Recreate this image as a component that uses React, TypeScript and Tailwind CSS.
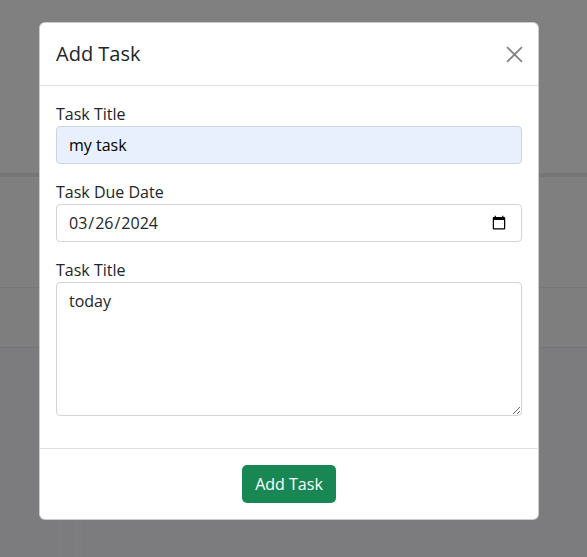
export default function App() {
  return (
    <div className="relative h-[557px] w-[587px] overflow-hidden bg-[#7c7c7e] font-['Open_Sans',sans-serif]">
      {/* underlying page, dimmed by backdrop */}
      <div className="flex flex-col">
        <div className="h-[173px] bg-[#808080]" />
        <div className="h-[4px] bg-[#767676]" />
        <div className="flex h-[110px] bg-[#7f7f80]" />
        <div className="h-[60px] border-t border-[#777779] bg-[#7e7e7f]" />
        <div className="flex h-[210px] border-t border-[#757577]">
          <div className="w-[57px]" />
          <div className="w-[6px] bg-[#7e7e80]" />
          <div className="w-[12px]" />
          <div className="w-[6px] bg-[#7e7e80]" />
        </div>
      </div>

      {/* modal */}
      <div className="absolute left-[39px] top-[22px] flex w-[500px] flex-col rounded-[6px] border border-black/20 bg-white text-[#212529]">
        <div className="flex items-center justify-between border-b border-[#dee2e6] px-4 py-4">
          <h5 className="text-[20px] leading-[30px]">Add Task</h5>
          <button className="mr-[-1px] flex h-[18px] w-[18px] items-center justify-center">
            <svg width="17" height="17" viewBox="0 0 16 16" fill="none" stroke="#808080" strokeWidth="1.6">
              <path d="M1 1L15 15M15 1L1 15" />
            </svg>
          </button>
        </div>

        <div className="flex flex-col gap-4 p-4 pb-8">
          <div>
            <label className="block text-[16px] leading-[24px]">Task Title</label>
            <input
              className="h-[38px] w-full rounded-[4px] border border-[#ced4da] bg-[#e8f0fe] px-3 text-[16px] text-black outline-none"
              defaultValue="my task"
            />
          </div>
          <div>
            <label className="block text-[16px] leading-[24px]">Task Due Date</label>
            <input
              type="date"
              className="h-[38px] w-full rounded-[4px] border border-[#ced4da] bg-white pl-[11px] pr-[12px] text-[16px] text-[#212529] outline-none"
              defaultValue="2024-03-26"
            />
          </div>
          <div>
            <label className="block text-[16px] leading-[24px]">Task Title</label>
            <textarea
              className="block h-[134px] w-full rounded-[4px] border border-[#ced4da] bg-white px-3 py-[6px] text-[16px] leading-[24px] text-[#212529] outline-none"
              defaultValue="today"
            />
          </div>
        </div>

        <div className="flex justify-center border-t border-[#dee2e6] px-3 py-4">
          <button className="h-[38px] rounded-[5px] bg-[#198754] px-[13px] text-[16px] text-white">Add Task</button>
        </div>
      </div>
    </div>
  )
}
